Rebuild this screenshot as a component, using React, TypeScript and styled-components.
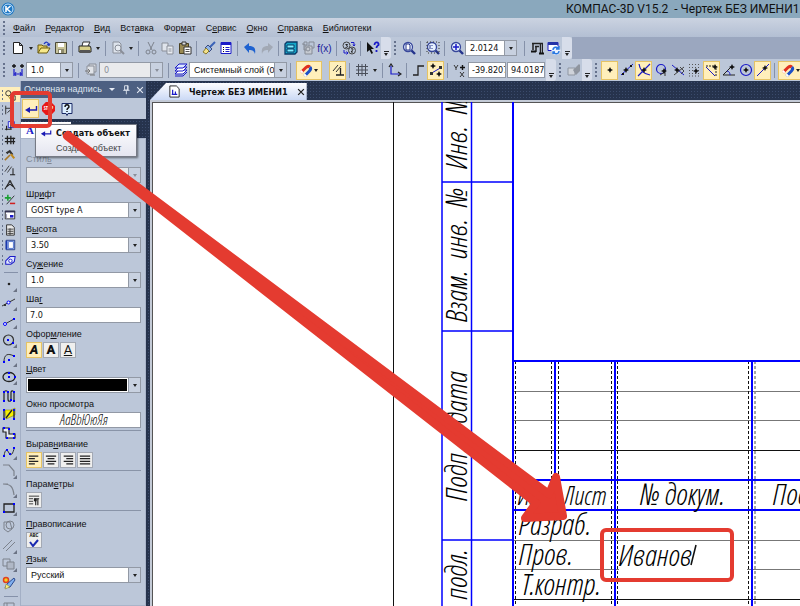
import React, { useState } from 'react';
import styled, { createGlobalStyle, css } from 'styled-components';

const UI_FONT = '"DejaVu Sans Condensed", "DejaVu Sans", "Noto Sans", sans-serif';
const LABEL_FONT = '"Liberation Sans", "Noto Sans", sans-serif';
const DRAFT_FONT = '"Open Sans Condensed Light", "Open Sans Condensed", "Open Sans", sans-serif';
const BLUE = '#0000ff';
const NAVY = '#1a1ac8';
const RED = '#e43b30';

const GlobalStyle = createGlobalStyle`
  * { box-sizing: border-box; }
  body { margin: 0; overflow: hidden; font-family: ${UI_FONT}; font-size: 9px; color: #111; }
  button, input, select { font: inherit; color: inherit; margin: 0; padding: 0; border-radius: 0; outline: none; }
`;

/* ---------- icons ---------- */

const line = (d: string, c = '#222', w = 1) => <path d={d} stroke={c} strokeWidth={w} fill="none" />;
const node = (x: number, y: number, c = NAVY) => <rect x={x - 1} y={y - 1} width="2" height="2" fill={c} />;
const star = (x: number, y: number) => (
  <path d={`M${x} ${y - 3}L${x + 1} ${y - 1}L${x + 3} ${y}L${x + 1} ${y + 1}L${x} ${y + 3}L${x - 1} ${y + 1}L${x - 3} ${y}L${x - 1} ${y - 1}Z`} fill="#111" />
);
const lens = (inner: React.ReactNode) => (
  <>
    <circle cx="6" cy="6" r="4.5" fill="#e8f2ff" stroke="#36469a" strokeWidth="1.3" />
    <path d="M9.5 9.5L13 13" stroke="#24348c" strokeWidth="2.4" />
    {inner}
  </>
);
const magnet = (
  <g transform="rotate(45 7 7)">
    <path d="M4.500 13V6c0-2 1-3 2.500-3" stroke="#e03020" strokeWidth="3" fill="none" />
    <path d="M9.500 13V6c0-2-1-3-2.500-3" stroke="#1c50c8" strokeWidth="3" fill="none" />
    <path d="M3 12h3M8 12h3" stroke="#fff" strokeWidth="2" />
  </g>
);

const ICONS: Record<string, React.ReactNode> = {
  newDoc: <path d="M2.500 1.500h6l3 3v8h-9zM8.500 1.500v3h3" fill="#fff" stroke="#222" />,
  open: <><path d="M1 12V4h4l1 1h4v2" fill="#e8d060" stroke="#6a5a10" /><path d="M1 12l3-5h9l-3 5z" fill="#f7e98a" stroke="#6a5a10" />{line('M7 3c2-3 4-2 5 1M10 3.500l2 1 1-2', '#2038c0', 1.3)}</>,
  save: <><path d="M1.500 1.500h11v11h-11z" fill="#c8c49a" stroke="#4a4a3a" /><path d="M4 2h6v4H4z" fill="#fff" /><path d="M4 8h6v4H4z" fill="#8d8a6c" /><path d="M5 9h2v3H5z" fill="#fff" /></>,
  print: <><path d="M4 5l1-4h7l-2 4" fill="#fff" stroke="#333" /><path d="M1 5h11l1 2v4H1z" fill="#d8d08a" stroke="#222" /><path d="M2 9h10v3H2z" fill="#555" /></>,
  preview: <><path d="M2 1h6l2 2v9H2z" fill="#dde3ec" stroke="#8a8f99" /><circle cx="7" cy="7" r="3" fill="#e8ecf2" stroke="#8a8f99" />{line('M9 9l4 4', '#8a8f99', 2)}</>,
  cut: <>{line('M4 1l4 8M10 1L6 9', '#7c828c')}<circle cx="4" cy="11" r="2" fill="none" stroke="#7c828c" /><circle cx="10" cy="11" r="2" fill="none" stroke="#7c828c" /></>,
  copy: <><path d="M1 2h6v8H1z" fill="#dfe4ec" stroke="#8a8f99" /><path d="M6 5h6v8H6z" fill="#e8ecf2" stroke="#8a8f99" />{line('M7.500 8h3M7.500 10h3', '#8a8f99')}</>,
  paste: <><path d="M1.500 2.500h9v10h-9z" fill="#9a8a52" stroke="#4a4020" /><path d="M4 1h4v3H4z" fill="#ddd" stroke="#333" /><path d="M6 6h7v7H6z" fill="#fff" stroke="#333" />{line('M7.500 8.500h4M7.500 10.500h4', '#555')}</>,
  brush: <>{line('M13 1L8 6', '#3a62b8', 2)}<path d="M6 4l4 4-3 3-4-4z" fill="#8fb4e6" stroke="#3a4a80" /><path d="M4 7l3 3-3 3-3-2z" fill="#f3e28a" stroke="#8a7a30" /></>,
  props: <><path d="M2 1.500h10v11H2z" fill="#fff" stroke={NAVY} /><path d="M2 1h10v3H2z" fill={NAVY} />{line('M4 6.500h1M4 8.500h1M4 10.500h1', '#111')}{line('M6.500 6.500h4M6.500 8.500h4M6.500 10.500h4', NAVY)}</>,
  undo: <path d="M1 6l5-4v3c5 0 7 2 6 8-1-3-2-4-6-4v3z" fill="#1e62d0" />,
  redo: <path d="M13 6L8 2v3C3 5 1 7 2 13c1-3 2-4 6-4v3z" fill="#a2a9b5" />,
  library: <><path d="M1 3l2-2h10v10l-2 2H1z" fill="#14a6c8" stroke="#0b3a66" strokeWidth="1.300" /><path d="M3 4h7v3H3zM3 8h7v3H3z" fill="#7ff0ff" stroke="#0b3a66" /></>,
  manager: <><path d="M3 1h3v3H3zM8 1h5v6H8z" fill="none" stroke="#858b95" /><path d="M4 5h7v8H4z" fill="#c6cad1" stroke="#858b95" /><circle cx="7" cy="8" r="2" fill="none" stroke="#858b95" />{line('M1 3h2v6h2', '#858b95')}</>,
  units: <><circle cx="4.500" cy="4.500" r="3.500" fill="none" stroke="#444" /><circle cx="10" cy="9.500" r="3.500" fill="none" stroke="#444" />{line('M3.500 3.500h2L4.500 5c2 0 1 2-1 1.500M9 8c2-1 3 0 0 3h2', '#222')}{line('M9 1.500h3V5M11 3.500l1 1.500 1-1.500M2 9v3h4M4.500 10.500L6 12l-1.500 1.500', NAVY)}</>,
  helpCursor: <><path d="M1 1v10l2.500-2 2 4 1.500-1-2-4h3z" fill="#111" />{line('M8.500 4c0-4 5-3 4 0-1 1-2 1-2 3M10.500 9v2', NAVY, 1.800)}</>,
  zoomPage: lens(<path d="M4 3h3l1 1v5H4z" fill="#fff" stroke="#24348c" />),
  zoomWindow: lens(<><path d="M6 4v1M6 7v1M4 4v4" stroke="#24348c" /><path d="M1 1h12v11H1z" fill="none" stroke="#333" strokeDasharray="1 2" /></>),
  zoomIn: lens(<path d="M6 3v6M3 6h6" stroke={NAVY} strokeWidth="1.500" />),
  rebuild: <>{line('M2 2.500h11M3 2v7M6 5v6M10.500 3v9M5 5.500h4', '#222', 1.500)}{line('M12.500 3v9', '#222', 1)}{line('M9 12.500h5M1 10.500h5', '#111', 2)}</>,
  refresh: <><path d="M1 1.500h10v8H1z" fill="#fff" stroke={NAVY} /><path d="M1 1h10v3H1z" fill="#2433a8" /><circle cx="9" cy="9.500" r="4.500" fill="#e9f1ff" />{line('M6 9c0-3 4-4 6-1M12 10c0 3-4 4-6 1M12 5v3H9M6 13v-2h2', '#2a78e0', 1.400)}</>,
  step: <>{line('M3 6v7M11 6v7M3 11h8', NAVY, 1.200)}{line('M1 3h4M3 1v4M9 3h4M11 1v4', '#111', 1.300)}{line('M5 9L4 11l1 2M9 9l1 2-1 2', NAVY)}</>,
  state: <><path d="M5 1h7v8H5z" fill="#d5d9e0" stroke="#8a8f99" /><path d="M3 3h7v8H3z" fill="#e0e3e8" stroke="#8a8f99" />{line('M1 8h5M4 6l2 2-2 2M6 12h5', '#777')}</>,
  layers: <><path d="M1 11l4-4h8l-4 4z" fill="#fff" stroke={NAVY} /><path d="M1 8l4-4h8L9 8z" fill="#fff" stroke={NAVY} /><path d="M1 5l4-4h8L9 5z" fill="#dce8ff" stroke={NAVY} />{line('M1 13h8l4-4', NAVY)}</>,
  magnet,
  ortho: <>{line('M2 8l5-6M5 9l5-6', '#333')}{line('M5 12h8M9.500 5v7', '#222', 1.300)}</>,
  grid: line('M1 3.500h12M1 7h12M1 10.500h12M3.500 1v12M7 1v12M10.500 1v12', '#4a4f5a'),
  lcs: <>{line('M3 3v8h9', NAVY, 1.200)}{line('M1 4l2-3 2 3M10 9l3 2-3 2', '#222', 1.200)}</>,
  orthoLine: line('M1 12h5V3h6', '#222', 1.300),
  snapLine: <>{line('M1 11l12-7', NAVY)}{star(4, 3)}{star(10, 11)}<rect x="1" y="9" width="3" height="3" fill="#333" /><rect x="10" y="3" width="3" height="3" fill="#333" /></>,
  yx: <>{line('M1 2l2 3 2-3M3 5v2M7 9l4 5M11 9l-4 5', '#333')}{line('M9.500 2v5M7 4.500h5', '#111', 1.400)}</>,
  eraser: <><path d="M1 5h7v7H1z" fill="#cfd3da" stroke="#9097a2" /><path d="M6 7l6-6 1 1v6l-4 4z" fill="#8f959f" /></>,
  point: star(7, 7),
  midpoint: <>{line('M1 12L13 1', NAVY)}{star(6, 7)}<rect x="10" y="2" width="2" height="2" fill="#111" /><rect x="2" y="10" width="2" height="2" fill="#111" /></>,
  cross: <>{line('M2 1c1 7 5 10 11 11M1 13L13 1', NAVY, 1.200)}{star(7, 7)}</>,
  tangent: <><circle cx="7" cy="6" r="4.500" fill="none" stroke={NAVY} strokeWidth="1.200" />{line('M11 6v7M6 12l5-3', '#333')}{star(10, 8)}</>,
  normal: <>{line('M1 2l12 10', NAVY)}{line('M13 4L3 12M9 4l4 4-3 3', '#444')}{star(6, 7)}</>,
  dots: <><path d="M1 1.500h12M1 4.500h12M1 7.500h12M1 10.500h12M1 13h12" stroke="#555" strokeDasharray="1 2" />{star(8, 8)}</>,
  align: <><path d="M1 3h10v10" stroke="#222" strokeDasharray="2 1" fill="none" />{line('M1 4l9 9', NAVY)}{star(10, 4)}</>,
  angle: <>{line('M1 12h12M1 12L9 4', '#222')}{line('M5 8c2 0 3 2 3 4', NAVY)}{star(10, 4)}</>,
  center: <><circle cx="7" cy="7" r="5.500" fill="none" stroke={NAVY} strokeWidth="1.200" />{star(7, 7)}</>,
  onCurve: <>{line('M1 13L13 1', NAVY)}{star(9, 5)}</>,
  enter: <>{line('M12.500 4v4H4', '#1a1ab4', 1.400)}<path d="M1 8l5-3v6z" fill="#1a1ab4" /></>,
  help: <><path d="M2 1.500h10v10H8l-1 2-1-2H2z" fill="#dceeff" stroke="#1a2a66" />{line('M5 5c0-3 4-3 4 0 0 1-2 1-2 3M7 9v1', '#111', 1.400)}</>,
  geometry: <><circle cx="5" cy="5" r="3" fill="none" stroke="#222" /><path d="M8 8h5v5H8z" fill="none" stroke="#222" />{line('M5 8l3 5', '#a08010')}</>,
  dims: <>{line('M2 2v10M11 2v10M2 5h9M4 10L11 4', '#222')}</>,
  marks: <><path d="M5 3h7v7H5z" fill="#dfe7ff" stroke={NAVY} />{line('M1 12h8M3 8v5M8 3v9', '#222', 1.300)}</>,
  edit: line('M1 5h12M1 9h12M4 2v10M8 2v10M11 4v8', '#222', 1.500),
  hammer: <><path d="M2 4l5-3 4 5-2 1-3-3-2 2z" fill="#333" /><path d="M8 6l4 5" stroke="#c08a20" strokeWidth="2.400" />{line('M1 13l6-6', '#a87828', 1.800)}</>,
  parametric: <>{line('M1 9l5-7M4 10l5-7', '#333')}{line('M7 12.500h6M10.500 5v7', '#222', 1.200)}</>,
  measure: <>{line('M7 2L1 12M7 2l6 10M3 9l4-3 4 3', '#222', 1.200)}<circle cx="7" cy="3" r="1.500" fill="#333" /></>,
  select: <>{line('M1 4.500h7M4.500 1v7', '#18a030', 1.800)}{line('M3 12L12 2', '#222')}{line('M7 11h6', '#d02020', 1.800)}</>,
  viewports: <><path d="M1.500 2.500h11v9h-11z" fill="#fff" stroke="#222" /><path d="M1 2h12v2H1z" fill="#335" /><path d="M7 7h4v3H7z" fill={NAVY} />{line('M3 6v5', '#88a')}</>,
  spec: <><path d="M3 1h6l3 3v9H3z" fill="#e8e8e8" stroke="#222" />{line('M4 6h7M4 8.500h7M4 11h7M7 5v8', '#333')}</>,
  report: <><path d="M2.500 1.500h10v11h-10z" fill="#cfe0ff" stroke="#122a80" /><path d="M5 3h6v8H5z" fill="#fff" stroke="#4468c8" />{line('M3 2v10', '#1838b0', 2)}</>,
  inserts: <><path d="M2 8l5-5h6l-1 6-4 3H2z" fill="#dfe7ff" stroke={NAVY} strokeWidth="1.200" /><circle cx="7.500" cy="8" r="2" fill="#fff" stroke={NAVY} /></>,
  gPoint: <circle cx="7" cy="7" r="1.300" fill="#222" />,
  gLine: <>{line('M0 11L13 4', '#333')}<circle cx="6.500" cy="7.500" r="1.500" fill="#fff" stroke={BLUE} />{node(3, 10, '#333')}</>,
  gSegment: <>{line('M3 10l9-5', '#333')}<circle cx="3" cy="10" r="1.500" fill="#fff" stroke={BLUE} />{node(12, 5, BLUE)}</>,
  gCircle: <><circle cx="6.500" cy="7" r="5" fill="none" stroke="#333" strokeWidth="1.200" />{node(6, 7, BLUE)}{node(11, 10, BLUE)}</>,
  gArc: <>{line('M2 11C2 3 6 2 12 5', '#333')}{node(2, 11, BLUE)}{node(12, 5, BLUE)}{node(7, 9, BLUE)}</>,
  gEllipse: <><ellipse cx="7" cy="7" rx="6" ry="4.500" fill="none" stroke="#222" strokeWidth="1.300" />{node(7, 7, BLUE)}{node(13, 7, BLUE)}{node(7, 3, BLUE)}</>,
  gPoly: <>{line('M2 12V4c0-3 4-3 4 0v6c0 3 3 3 3 0V3c1-2 3-1 3 1v8', '#222', 1.200)}{node(2, 12, BLUE)}{node(6, 3, BLUE)}{node(9, 11, BLUE)}{node(12, 12, BLUE)}{node(2, 3, BLUE)}{node(12, 3, BLUE)}</>,
  gAuto: <><path d="M3 3h6l4-2v7l-9 4z" fill="#f6f000" stroke="#7a7a00" strokeWidth=".5" />{line('M2 12V4M12 4v9M4 11l6-8', '#222', 1.300)}{node(2, 12, BLUE)}{node(12, 12, BLUE)}{node(2, 3, BLUE)}{node(12, 3, BLUE)}</>,
  gMulti: <><path d="M1 2h6v6h6v4H4V6H1z" fill="#e4e9f4" stroke="#222" strokeWidth="1.200" />{node(2, 2, BLUE)}{node(7, 3, BLUE)}{node(12, 8, BLUE)}{node(12, 12, BLUE)}{node(5, 12, BLUE)}</>,
  gCurve: <>{line('M2 11c1-7 3-7 5-3s4 0 5-4', '#333')}{node(2, 11, BLUE)}{node(5, 5, BLUE)}{node(12, 3, BLUE)}{node(8, 9, BLUE)}</>,
  gChamfer: line('M1 2h6l5 6v5', '#7c828c', 1.200),
  gFillet: line('M1 2c8 0 10 3 11 11M1 2h5', '#7c828c', 1.200),
  gRect: <>{line('M2 3h10v8H2z', '#222', 1.300)}{node(2, 11, BLUE)}{node(12, 3, BLUE)}</>,
  gCollect: <><circle cx="8" cy="6" r="4" fill="none" stroke="#7c828c" /><path d="M2 3h6l2 7-4 3-4-3z" fill="none" stroke="#7c828c" /></>,
  gEquid: line('M1 11l9-9M4 13l9-9', '#7c828c'),
  gContour: <><path d="M1 2h7v7H1z" fill="none" stroke="#7c828c" /><path d="M5 5h7v7H5z" fill="#b0b8c6" stroke="#7c828c" /></>,
  gHatch: <><circle cx="4" cy="4" r="2.500" fill="#f6d020" stroke="#e04020" strokeWidth="1.500" /><path d="M12 2l1 2-5 7-5 1 2-4z" fill="#7fb0f0" stroke="#2a4a90" /><path d="M4 8l4 3-5 2z" fill="#f7f080" stroke="#8a7a30" strokeWidth=".5" /></>,
  gMore: line('M2 2h10v10H2zM5 2v10', '#7c828c'),
  left: line('M1 2.500h11M1 5.500h7M1 8.500h11M1 11.500h7', '#222', 1.400),
  middle: line('M1 2.500h12M3 5.500h8M1 8.500h12M3 11.500h8', '#222', 1.400),
  right: line('M2 2.500h11M5 5.500h8M2 8.500h11M5 11.500h8', '#222', 1.400),
  justify: line('M1 2.500h12M1 5.500h12M1 8.500h12M1 11.500h12', '#222', 1.400),
  paragraph: <>{line('M1 2.500h12M1 5.500h5M1 8.500h5M1 11.500h5', '#222')}{line('M7 5.500h6M9 5v8M11.500 5v8', '#222', 1.300)}<circle cx="8.500" cy="7" r="1.800" fill="#222" /></>,
  pin: line('M5 1h5v6H5zM9 1v6M3 7.500h9M7.500 8v5', '#e6ebf5', 1.200),
  closeLight: line('M3 3l8 8M11 3l-8 8', '#e6ebf5', 1.500),
  closeDark: line('M3 3l8 8M11 3l-8 8', '#222', 1.800),
  docTab: <><path d="M2 1h7l3 3v9H2z" fill="#fff" stroke="#222" />{line('M5 5v5M4 10h6M8 7v3', NAVY, 1.300)}</>,
};

const Svg = styled.svg<{ $s: number }>`
  width: ${(p) => p.$s}px;
  height: ${(p) => p.$s}px;
  flex: none;
  display: block;
`;
const Icon = ({ name, size = 14 }: { name: string; size?: number }) => (
  <Svg viewBox="0 0 14 14" $s={size} aria-hidden="true">{ICONS[name]}</Svg>
);

/* ---------- shell ---------- */

const Page = styled.div`
  position: relative;
  height: 100vh;
  display: flex;
  flex-direction: column;
  overflow: hidden;
  background: #9ba7bf;
`;

const TitleBar = styled.header`
  flex: none;
  display: flex;
  align-items: center;
  height: 18px;
  padding-left: 1px;
  background: #8aa8bd;
`;
const AppTitle = styled.h1`
  margin: 0 0 0 551px;
  font: 400 12px/18px Roboto, "Noto Sans", sans-serif;
  white-space: pre;
`;

const MenuBar = styled.nav`
  flex: none;
  display: flex;
  align-items: center;
  height: 19px;
  background: linear-gradient(#cbd3e1, #b3bfd3);
  font-family: ${LABEL_FONT};
`;
const MenuLink = styled.a`
  color: #111;
  text-decoration: none;
  margin-right: 10px;
  white-space: nowrap;
`;

const dotted = css`
  background-image: repeating-linear-gradient(#66728c 0 2px, transparent 2px 4px);
  background-repeat: no-repeat;
`;
const Grip = styled.span`
  flex: none;
  width: 9px;
  height: 14px;
  ${dotted}
  background-size: 2px 100%;
  background-position: 3px 0;
`;

const Toolbars = styled.div`
  flex: none;
`;
const ToolRow = styled.div`
  display: flex;
  height: 22px;
`;
const Toolbar = styled.div`
  flex: none;
  display: flex;
  align-items: center;
  height: 22px;
  background: #bcc7d9;
`;

const hot = css`
  background: #ffefbb;
  border-color: #e5c365;
`;
const ToolButton = styled.button<{ $on?: boolean; $wide?: boolean }>`
  flex: none;
  display: flex;
  align-items: center;
  justify-content: center;
  width: ${(p) => (p.$wide ? 26 : 17)}px;
  height: 19px;
  border: 1px solid transparent;
  background: none;
  ${(p) => p.$on && hot}
`;
const FxButton = styled(ToolButton)`
  color: #1a1a9a;
  font-family: ${LABEL_FONT};
  font-size: 10px;
`;
const Caret = styled.span<{ $light?: boolean }>`
  flex: none;
  border: 3px solid transparent;
  border-top-color: ${(p) => (p.$light ? '#e6ebf5' : '#222')};
  border-bottom: 0;
`;
const SmallCaret = styled(Caret)<{ $off?: boolean }>`
  border-width: 2px;
  border-top-width: 3px;
  border-bottom: 0;
  border-top-color: ${(p) => (p.$off ? '#8a8f99' : '#222')};
`;
const CaretButton = styled.button`
  flex: none;
  display: flex;
  align-items: center;
  justify-content: center;
  width: 9px;
  height: 18px;
  border: 0;
  background: none;
`;
const Rule = styled.span`
  flex: none;
  width: 1px;
  height: 15px;
  margin: 0 3px;
  background: #8591a9;
`;
const Overflow = styled.button`
  flex: none;
  display: flex;
  flex-direction: column;
  align-items: center;
  justify-content: flex-end;
  gap: 1px;
  width: 10px;
  height: 22px;
  padding-bottom: 3px;
  border: 0;
  border-radius: 0 3px 3px 0;
  background: #d7ddea;

  &::before {
    content: '';
    width: 5px;
    height: 1px;
    background: #222;
  }
`;

const ComboShell = styled.span<{ $w?: number; $off?: boolean; $label?: boolean }>`
  position: relative;
  flex: none;
  display: block;
  width: ${(p) => (p.$w ? `${p.$w}px` : '100%')};
  height: 16px;

  select {
    appearance: none;
    display: block;
    width: 100%;
    height: 100%;
    padding: 0 12px 0 4px;
    border: 1px solid #9299a5;
    background: ${(p) => (p.$off ? '#e9eaec' : '#fff')};
    color: ${(p) => (p.$off ? '#8a8f99' : '#111')};
    font-family: ${(p) => (p.$label ? LABEL_FONT : UI_FONT)};
    opacity: 1;
    text-overflow: clip;
  }
`;
const ComboArrow = styled.span`
  position: absolute;
  inset: 1px 1px 1px auto;
  width: 12px;
  display: flex;
  align-items: center;
  justify-content: center;
  border-left: 1px solid #9299a5;
  background: #c8d1e0;
  pointer-events: none;
`;
const Swatch = styled.span`
  position: absolute;
  inset: 2px 14px 2px 2px;
  background: #000;
  pointer-events: none;
`;

type ComboProps = { label: string; value: string; w?: number; off?: boolean; id?: string; swatch?: boolean; plain?: boolean };
const Combo = ({ label, value, w, off, id, swatch, plain }: ComboProps) => (
  <ComboShell $w={w} $off={off} $label={plain}>
    <select id={id} aria-label={label} disabled={off}>
      <option>{value}</option>
    </select>
    {swatch && <Swatch />}
    <ComboArrow><SmallCaret $off={off} /></ComboArrow>
  </ComboShell>
);
const CoordInput = styled.input`
  flex: none;
  width: 38px;
  height: 16px;
  margin-right: 1px;
  padding-left: 3px;
  border: 1px solid #9299a5;
  background: #fff;
`;

const Tool = ({ icon, on }: { icon: string; on?: boolean }) => (
  <ToolButton $on={on} aria-label={icon} aria-pressed={on}><Icon name={icon} /></ToolButton>
);
const Drop = ({ icon }: { icon: string }) => (
  <>
    <Tool icon={icon} />
    <CaretButton aria-label={`${icon} options`}><SmallCaret /></CaretButton>
  </>
);
const WideTool = ({ icon }: { icon: string }) => (
  <ToolButton $on $wide aria-label={icon}><Icon name={icon} /><SmallCaret /></ToolButton>
);
const More = () => <Overflow aria-label="more"><SmallCaret /></Overflow>;

const Pad = styled.span<{ $w: number }>`
  flex: none;
  width: ${(p) => p.$w}px;
`;

const MainTools = () => (
  <ToolRow>
    <Toolbar>
      <Grip /><Drop icon="newDoc" /><Tool icon="open" /><Tool icon="save" /><Rule />
      <Drop icon="print" /><Rule /><Drop icon="preview" /><Rule />
      <Tool icon="cut" /><Tool icon="copy" /><Tool icon="paste" /><Rule />
      <Tool icon="brush" /><Tool icon="props" /><Rule />
      <Tool icon="undo" /><Tool icon="redo" /><Rule />
      <Tool icon="library" /><Tool icon="manager" /><FxButton>f(x)</FxButton><Rule />
      <Tool icon="units" /><Rule /><Tool icon="helpCursor" /><More />
    </Toolbar>
    <Toolbar>
      <Grip /><Tool icon="zoomPage" /><Rule /><Tool icon="zoomWindow" /><Rule /><Tool icon="zoomIn" />
      <Combo label="Масштаб" value="2.0124" w={52} /><Pad $w={4} /><Rule />
      <Tool icon="rebuild" /><Tool icon="refresh" /><More />
    </Toolbar>
  </ToolRow>
);

const StateTools = () => (
  <ToolRow>
    <Toolbar>
      <Grip /><Tool icon="step" /><Combo label="Шаг курсора" value="1.0" w={47} /><Pad $w={2} /><Rule />
      <Tool icon="state" /><Combo label="Состояние" value="0" w={64} off /><Pad $w={2} /><Rule />
      <Tool icon="layers" /><Combo label="Слой" value="Системный слой (0)" w={98} plain /><Rule />
      <Pad $w={2} /><WideTool icon="magnet" /><Pad $w={7} /><Tool icon="ortho" on /><Rule />
      <Drop icon="grid" /><Rule /><Tool icon="lcs" /><Rule /><Tool icon="orthoLine" /><Tool icon="snapLine" on />
      <Rule /><Tool icon="yx" />
      <CoordInput aria-label="X" defaultValue="-39.8207" /><CoordInput aria-label="Y" defaultValue="94.0187" />
      <More />
    </Toolbar>
    <Toolbar><Grip /><Tool icon="eraser" /><More /></Toolbar>
    <Toolbar>
      <Grip /><Tool icon="point" on /><Tool icon="midpoint" /><Tool icon="cross" on /><Tool icon="tangent" />
      <Tool icon="normal" /><Tool icon="dots" /><Tool icon="align" on /><Tool icon="angle" />
      <Tool icon="center" /><Tool icon="onCurve" on /><Rule /><WideTool icon="magnet" />
    </Toolbar>
  </ToolRow>
);

/* ---------- workspace ---------- */

const Workspace = styled.div`
  flex: 1;
  min-height: 0;
  display: flex;
  background: radial-gradient(circle, #3b4b6c 1px, transparent 1px) 0 0 / 3px 3px #26334d;
`;
const Strip = styled.aside`
  flex: none;
  width: 21px;
  padding-top: 6px;
  overflow: hidden;
  background: #bcc7d9;
  border-right: 1px solid #a3afc5;
`;
const StripButton = styled.button<{ $on?: boolean }>`
  display: flex;
  align-items: center;
  width: 20px;
  height: 15px;
  padding-left: 4px;
  border: 0;
  background-color: ${(p) => (p.$on ? '#ffefbb' : 'transparent')};
  ${dotted}
  background-size: 1px 10px;
  background-position: 2px 3px;
`;
const GeoButton = styled.button<{ $menu: boolean }>`
  position: relative;
  display: flex;
  align-items: center;
  width: 20px;
  height: 17px;
  padding-left: 2px;
  border: 0;
  background: none;
  ${(p) => p.$menu && css`
    &::after {
      content: '';
      position: absolute;
      right: 3px;
      bottom: 0;
      border: 2px solid #6b7384;
      border-top-color: transparent;
      border-left-color: transparent;
    }
  `}
`;
const StripRule = styled.div`
  height: 1px;
  margin: 5px 2px 2px 4px;
  background: #8591a9;
`;
const GeoList = styled.div`
  display: flex;
  flex-direction: column;
  justify-content: space-between;
  height: 316px;
`;

const PAGES = ['geometry', 'dims', 'marks', 'edit', 'hammer', 'parametric', 'measure', 'select', 'viewports', 'spec', 'report', 'inserts'];
const GEO = ['gPoint', 'gLine', 'gSegment', 'gCircle', 'gArc', 'gEllipse', 'gPoly', 'gAuto', 'gMulti', 'gCurve', 'gChamfer', 'gFillet', 'gRect', 'gCollect', 'gEquid', 'gContour', 'gHatch'];
const PLAIN = ['gPoly', 'gAuto', 'gMulti', 'gCollect', 'gHatch'];

const Panel = styled.section`
  position: relative;
  flex: none;
  width: 125px;
  display: flex;
  flex-direction: column;
`;
const PanelHead = styled.header`
  flex: none;
  display: flex;
  align-items: center;
  gap: 4px;
  height: 17px;
  padding: 0 1px 0 3px;
  background: #4d6082;
  color: #dfe5ef;
`;
const PanelTitle = styled.h2`
  flex: 1;
  margin: 0;
  font: 400 9px/17px ${LABEL_FONT};
  white-space: nowrap;
`;
const HeadButton = styled.button`
  flex: none;
  width: 10px;
  height: 12px;
  display: flex;
  align-items: center;
  justify-content: center;
  border: 0;
  background: none;
`;
const PanelTools = styled.div`
  flex: none;
  display: flex;
  align-items: center;
  gap: 1px;
  height: 21px;
  padding-left: 1px;
  background: #bcc7d9;
`;
const StopSign = styled.span`
  width: 13px;
  height: 13px;
  background: #e81818;
  clip-path: polygon(30% 0, 70% 0, 100% 30%, 100% 70%, 70% 100%, 30% 100%, 0 70%, 0 30%);
  color: #fff;
  font: 700 5px/13px "Liberation Sans Narrow", "Open Sans Condensed", sans-serif;
  text-align: center;
`;
const PanelTabs = styled.div`
  flex: none;
  display: flex;
  align-items: flex-end;
  height: 19px;
`;
const PanelTab = styled.button<{ $on?: boolean }>`
  width: 50px;
  height: 16px;
  padding: 0 0 0 5px;
  border: 0;
  background: ${(p) => (p.$on ? '#fff' : 'transparent')};
  color: ${(p) => (p.$on ? NAVY : '#0c1424')};
  font: 700 11px/14px "Liberation Serif", serif;
  text-align: left;
`;
const PanelBody = styled.form`
  flex: 1;
  min-height: 0;
  padding: 9px 4px 0 5px;
  background: #bcc7d9;
  border: 1px solid #a9b4c9;
  border-left: 0;
  overflow: hidden;
`;
const FieldLabel = styled.label<{ $off?: boolean }>`
  display: block;
  height: 19px;
  padding-top: 5px;
  font-family: ${LABEL_FONT};
  line-height: 13px;
  white-space: nowrap;
  color: ${(p) => (p.$off ? '#7f8795' : '#111')};
`;
const FieldInput = styled.input`
  display: block;
  width: 100%;
  height: 16px;
  padding-left: 3px;
  border: 1px solid #9299a5;
  background: #fff;
`;
const Preview = styled.output`
  display: block;
  height: 16px;
  border: 1px solid #9299a5;
  background: #fff;
  font: italic 300 14px/14px ${DRAFT_FONT};
  text-align: center;
`;
const ButtonRow = styled.div`
  display: flex;
  gap: 1px;
  height: 16px;
`;
const StyleButton = styled.button<{ $on?: boolean; $kind?: 'i' | 'b' | 'u' }>`
  display: flex;
  align-items: center;
  justify-content: center;
  width: 16px;
  height: 16px;
  border: 1px solid #a3a9b4;
  background: #efefee;
  font: ${(p) => (p.$kind === 'u' ? 400 : 900)} 13px/14px Roboto, sans-serif;
  font-style: ${(p) => (p.$kind === 'i' ? 'italic' : 'normal')};
  text-decoration: ${(p) => (p.$kind === 'u' ? 'underline' : 'none')};
  ${(p) => p.$on && hot}
`;
const Divider = styled.hr`
  height: 1px;
  margin: 2px 0;
  border: 0;
  background: #8994a8;
`;
const SpellText = styled.span`
  display: flex;
  flex-direction: column;
  align-items: center;
  font: 700 5px/5px "Liberation Mono", monospace;
`;

const Tooltip = styled.div`
  position: absolute;
  z-index: 2;
  top: 43px;
  left: 14px;
  width: 102px;
  height: 33px;
  padding: 0 0 0 4px;
  display: grid;
  grid-template-columns: 16px 1fr;
  grid-auto-rows: 15px;
  align-items: center;
  border: 1px solid #767a85;
  background: linear-gradient(#fff, #e4e5f0);
  box-shadow: 1px 1px 2px rgba(0, 0, 0, 0.5);
  white-space: nowrap;
`;
const TipBody = styled.span`
  grid-column: 2;
  color: #444;
  font-family: ${LABEL_FONT};
`;

const Field = ({ id, children, off, text }: { id: string; children: React.ReactNode; off?: boolean; text: [string, string, string] }) => (
  <div>
    <FieldLabel htmlFor={id} $off={off}>{text[0]}<u>{text[1]}</u>{text[2]}</FieldLabel>
    {children}
  </div>
);

const PropertyPanel = () => (
  <Panel>
    <PanelHead>
      <PanelTitle>Основная надпись</PanelTitle>
      <HeadButton aria-label="menu"><Caret $light /></HeadButton>
      <HeadButton aria-label="pin"><Icon name="pin" size={10} /></HeadButton>
      <HeadButton aria-label="close"><Icon name="closeLight" size={10} /></HeadButton>
    </PanelHead>
    <PanelTools>
      <Tool icon="enter" on />
      <ToolButton aria-label="stop"><StopSign>STOP</StopSign></ToolButton>
      <Tool icon="help" />
    </PanelTools>
    <PanelTabs>
      <PanelTab $on>A</PanelTab>
      <PanelTab>Sh</PanelTab>
    </PanelTabs>
    <Tooltip role="tooltip">
      <Icon name="enter" size={12} />
      <b>Создать объект</b>
      <TipBody>Создать объект</TipBody>
    </Tooltip>
    <PanelBody>
      <Field id="style" off text={['Стил', 'ь', '']}><Combo id="style" label="Стиль" value="" off /></Field>
      <Field id="font" text={['Шр', 'и', 'фт']}><Combo id="font" label="Шрифт" value="GOST type A" /></Field>
      <Field id="height" text={['В', 'ы', 'сота']}><Combo id="height" label="Высота" value="3.50" /></Field>
      <Field id="narrow" text={['Су', 'ж', 'ение']}><Combo id="narrow" label="Сужение" value="1.0" /></Field>
      <Field id="step" text={['Ша', 'г', '']}><FieldInput id="step" defaultValue="7.0" /></Field>
      <Field id="bold" text={['Офор', 'м', 'ление']}>
        <ButtonRow>
          <StyleButton type="button" id="bold" $on $kind="i">A</StyleButton>
          <StyleButton type="button" $kind="b">A</StyleButton>
          <StyleButton type="button" $kind="u">A</StyleButton>
        </ButtonRow>
      </Field>
      <Field id="color" text={['', 'Ц', 'вет']}><Combo id="color" label="Цвет" value="" swatch /></Field>
      <Field id="preview" text={['Окно просмотра', '', '']}><Preview id="preview">АаВbЮюЯя</Preview></Field>
      <Divider />
      <Field id="align" text={['Вырав', 'н', 'ивание']}>
        <ButtonRow>
          <StyleButton type="button" id="align" $on aria-label="left"><Icon name="left" size={12} /></StyleButton>
          <StyleButton type="button" aria-label="center"><Icon name="middle" size={12} /></StyleButton>
          <StyleButton type="button" aria-label="right"><Icon name="right" size={12} /></StyleButton>
          <StyleButton type="button" aria-label="justify"><Icon name="justify" size={12} /></StyleButton>
        </ButtonRow>
      </Field>
      <Divider />
      <Field id="params" text={['Парам', 'е', 'тры']}>
        <StyleButton type="button" id="params" aria-label="paragraph"><Icon name="paragraph" size={12} /></StyleButton>
      </Field>
      <Divider />
      <Field id="spell" text={['', 'П', 'равописание']}>
        <StyleButton type="button" id="spell">
          <SpellText>
            ABC
            <svg width="10" height="8" viewBox="0 0 10 8" aria-hidden="true">{line('M1 3l3 4 5-6', '#1a2ab0', 2)}</svg>
          </SpellText>
        </StyleButton>
      </Field>
      <Field id="lang" text={['', 'Я', 'зык']}><Combo id="lang" label="Язык" value="Русский" plain /></Field>
    </PanelBody>
  </Panel>
);

const DocArea = styled.main`
  flex: 1;
  min-width: 0;
  display: flex;
  flex-direction: column;
  margin-left: 4px;
`;
const DocTabs = styled.div`
  flex: none;
  display: flex;
  padding-top: 2px;
`;
const DocTab = styled.div`
  display: flex;
  align-items: center;
  gap: 8px;
  height: 17px;
  padding: 0 1px 0 18px;
  background: linear-gradient(#fdfdff, #cbd9f5);
  clip-path: polygon(16px 0, 100% 0, 100% 100%, 0 100%);
  font-weight: 700;
  white-space: nowrap;
`;
const Sheet = styled.div`
  position: relative;
  flex: 1;
  min-height: 0;
  border-top: 2px solid #c3cad6;
  border-left: 2px solid #c3cad6;
  box-shadow: inset 1px 1px 0 #555;
  background: #fff;
  overflow: hidden;
`;
const Drawing = styled.svg`
  display: block;
  width: 100%;
  height: 100%;
`;
const DraftText = styled.text<{ $small?: boolean }>`
  font: italic 300 ${(p) => (p.$small ? 26 : 30)}px ${DRAFT_FONT};
  fill: #000;
`;
const EntryInput = styled.input`
  position: absolute;
  top: 437px;
  left: 466px;
  width: 110px;
  height: 32px;
  border: 0;
  background: none;
  && { font: italic 300 30px/32px ${DRAFT_FONT}; color: #000; }
`;

/* Side-column captions run upwards, with a wide gap between their words. */
const SideText = ({ words, y, gap = 6, anchor = 'start' }: { words: string[]; y: number; gap?: number; anchor?: 'start' | 'end' }) => (
  <DraftText transform={`translate(467 ${y}) rotate(-90)`} textAnchor={anchor}>
    {words.map((w, i) => (
      <tspan key={w} dx={i ? gap : 0}>{i ? ` ${w}` : w}</tspan>
    ))}
  </DraftText>
);

const StampDrawing = () => (
  <Drawing role="img" aria-label="Основная надпись чертежа">
    <g transform="translate(-152 -102)">
      <path d="M393.500 102V3000" stroke="#111" />
      <g stroke="#111" fill="none">
        <path d="M513 450.500H3000M513 599.500H3000" />
        <path d="M513 391.500H3000M513 420.500H3000M513 540.500H3000M513 569.500H619M747 569.500H3000" stroke="#777" />
        <path d="M515.500 361V3000M611.500 361V3000M617.500 361V3000M748.500 361V3000M551.500 361V480M558.500 361V480" strokeDasharray="3 2" />
        <path d="M755 361V3000" stroke="#888" strokeDasharray="3 2" strokeWidth="1.500" />
      </g>
      <g stroke={BLUE} fill="none">
        <path d="M442 102V3000M471.500 102V3000M442 182H513M442 331H513M442 540H513" strokeWidth="1.500" />
        <path d="M513 102V3000M513 361H3000M555 361V510M615 361V3000M752 361V3000M513 480H3000M513 510H3000" strokeWidth="2" />
      </g>
      <SideText words={['Инв.', '№']} y={170} />
      <SideText words={['Взам.', 'инв.', '№']} y={323} />
      <SideText words={['Подп.', 'и', 'дата']} y={502} gap={1} />
      <SideText words={['№', 'подл.']} y={550} anchor="end" />
      <DraftText $small x="517" y="505">Изм.</DraftText>
      <DraftText $small x="563" y="505">Лист</DraftText>
      <DraftText x="639" y="505">№ докум.</DraftText>
      <DraftText x="772" y="505">Под</DraftText>
      <DraftText x="518" y="535">Разраб.</DraftText>
      <DraftText x="518" y="565">Пров.</DraftText>
      <DraftText x="521" y="595">Т.контр.</DraftText>
      <path d="M691 565L696 545" stroke="#111" strokeWidth="1.500" />
    </g>
  </Drawing>
);

const Annotations = styled.svg`
  position: absolute;
  inset: 0;
  z-index: 3;
  width: 100%;
  height: 100%;
  pointer-events: none;
`;

const MENU: [string, string, string][] = [
  ['', 'Ф', 'айл'], ['', 'Р', 'едактор'], ['', 'В', 'ид'], ['Вст', 'а', 'вка'], ['Фор', 'м', 'ат'],
  ['С', 'е', 'рвис'], ['', 'О', 'кно'], ['', 'С', 'правка'], ['', 'Б', 'иблиотеки'],
];

export default function App() {
  const [entry, setEntry] = useState('Иванов');
  return (
    <Page>
      <GlobalStyle />
      <TitleBar>
        <Svg $s={14} viewBox="0 0 14 14" aria-hidden="true">
          <circle cx="7" cy="7" r="6.500" fill="#1d77c4" />
          <circle cx="7" cy="7" r="5" fill="none" stroke="#cfe8fb" />
          <path d="M5 4v6M9.500 4L6 7l3.500 3" stroke="#fff" strokeWidth="1.600" fill="none" />
        </Svg>
        <AppTitle>{'КОМПАС-3D V15.2  - Чертеж БЕЗ ИМЕНИ1 -'}</AppTitle>
      </TitleBar>
      <MenuBar>
        <Grip /><Pad $w={4} />
        {MENU.map(([a, u, b]) => (
          <MenuLink href="#" key={a + u + b}>{a}<u>{u}</u>{b}</MenuLink>
        ))}
      </MenuBar>
      <Toolbars>
        <MainTools />
        <StateTools />
      </Toolbars>
      <Workspace>
        <Strip>
          {PAGES.map((n, i) => (
            <StripButton key={n} $on={i === 0} aria-label={n}><Icon name={n} size={12} /></StripButton>
          ))}
          <StripRule />
          <GeoList>
            {GEO.map((n) => (
              <GeoButton key={n} $menu={!PLAIN.includes(n)} aria-label={n}><Icon name={n} /></GeoButton>
            ))}
          </GeoList>
          <StripRule />
          <GeoButton $menu={false} aria-label="more"><Icon name="gMore" /></GeoButton>
        </Strip>
        <PropertyPanel />
        <DocArea>
          <DocTabs>
            <DocTab>
              <Icon name="docTab" size={13} />
              Чертеж БЕЗ ИМЕНИ1
              <HeadButton aria-label="close document"><Icon name="closeDark" size={10} /></HeadButton>
            </DocTab>
          </DocTabs>
          <Sheet>
            <StampDrawing />
            <EntryInput aria-label="Фамилия" value={entry} onChange={(e) => setEntry(e.target.value)} />
          </Sheet>
        </DocArea>
      </Workspace>
      <Annotations aria-hidden="true">
        <rect x="12" y="93" width="38" height="33" rx="3" fill="none" stroke={RED} strokeWidth="4" />
        <rect x="602" y="530" width="130" height="50" rx="4" fill="none" stroke={RED} strokeWidth="4" />
        <path
          d="M68 135L549 494L556 477L563 516L525 518L536 503L67 136Z"
          fill={RED} stroke={RED} strokeWidth="8" strokeLinejoin="round"
        />
      </Annotations>
    </Page>
  );
}
